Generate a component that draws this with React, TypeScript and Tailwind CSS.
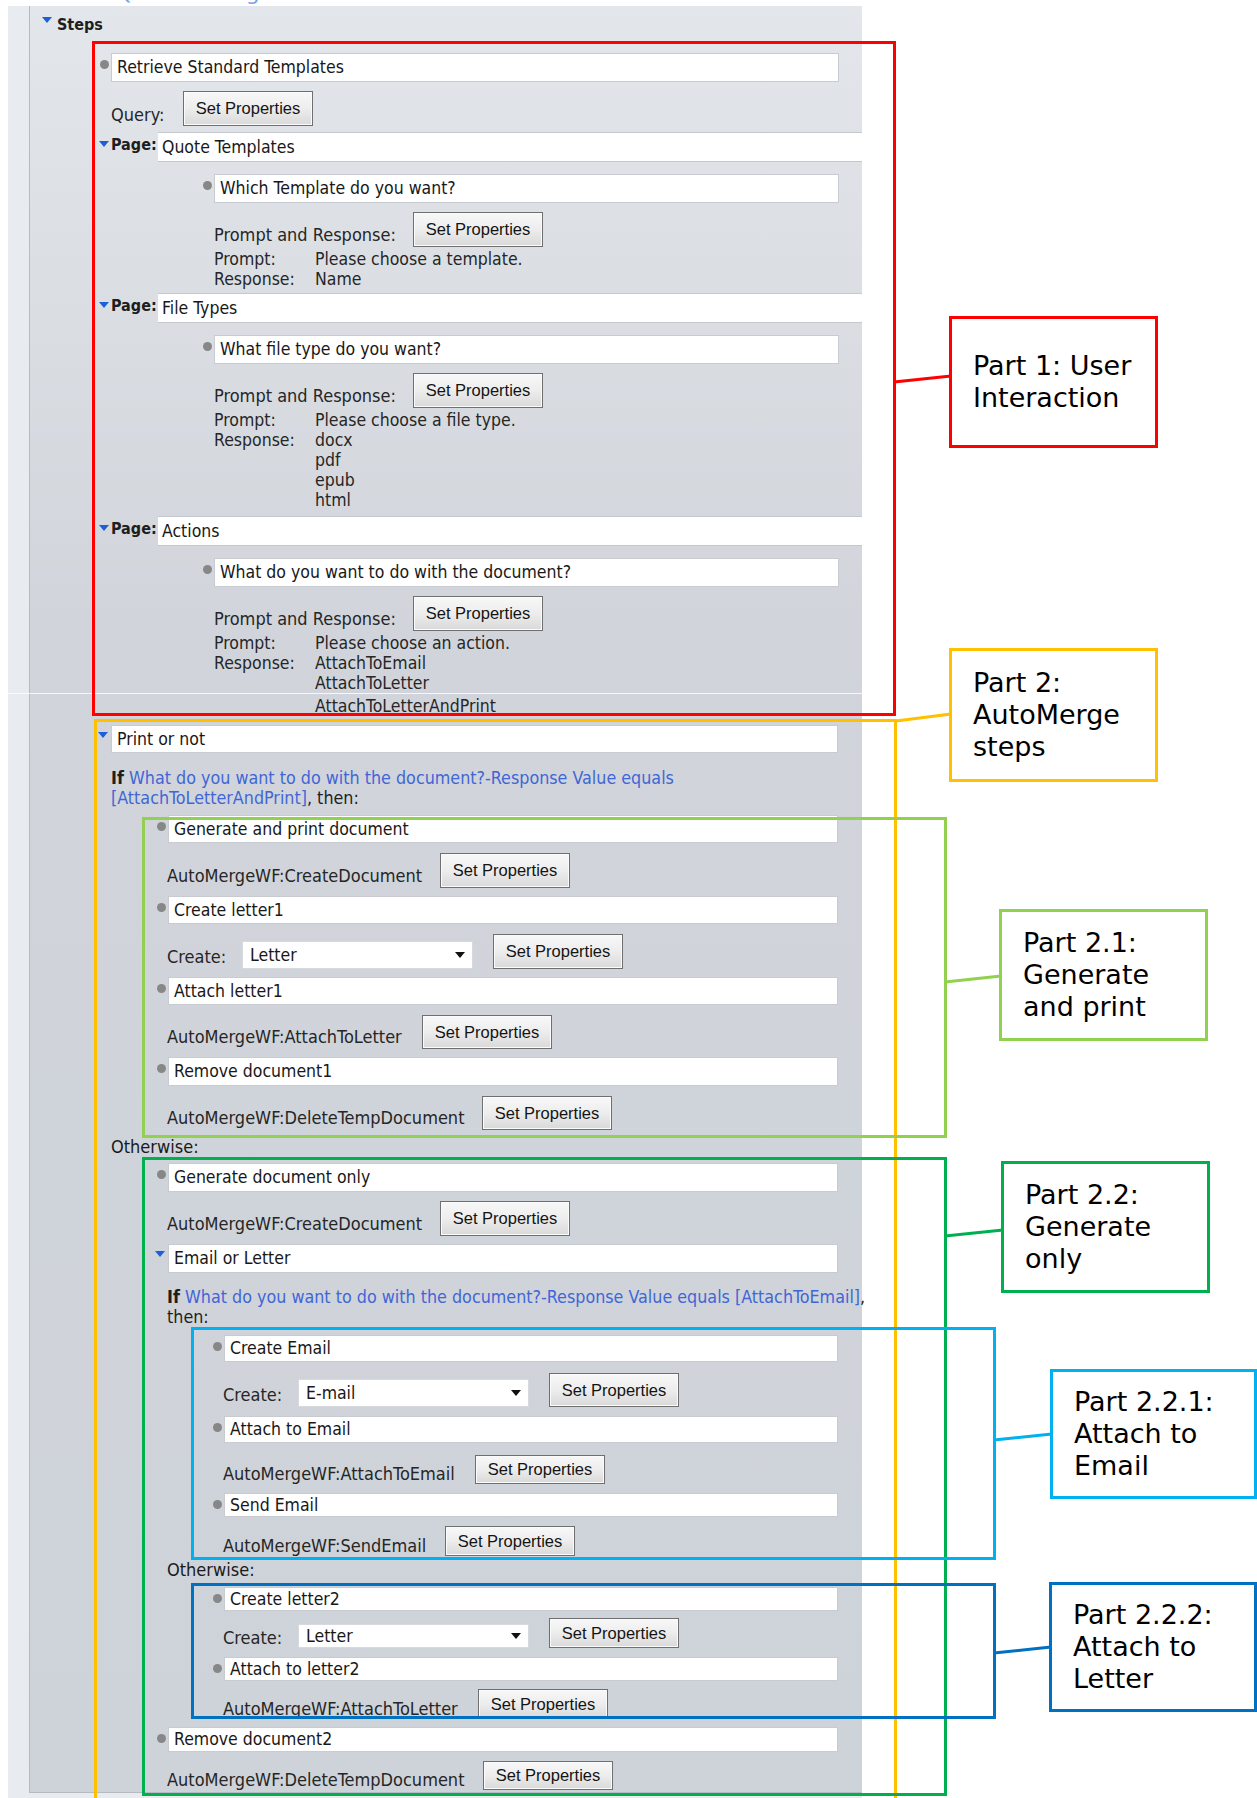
import React from "react";

const UI = "font-['DejaVu_Sans_Condensed','DejaVu_Sans',sans-serif]";
const BTN = "font-['Liberation_Sans',Arial,sans-serif]";
const NOTE = "font-['DejaVu_Sans','Verdana',sans-serif]";

type BoxProps = { text: string; className: string; mark?: "dot" | "caret" };

const Caret = ({ className }: { className: string }) => (
  <span className={`absolute w-0 h-0 border-x-[5px] border-x-transparent border-t-[6px] border-t-[#1d5fd6] ${className}`} />
);

const Box = ({ text, className, mark }: BoxProps) => (
  <div className={`relative flex items-center shrink-0 bg-white border border-[#c8ccd1] pl-[5px] text-[#181818] ${className}`}>
    {mark === "dot" && <span className="absolute left-[-12px] top-[6px] w-[9px] h-[9px] rounded-full bg-[#878787]" />}
    {mark === "caret" && <Caret className="left-[-14px] top-[6px]" />}
    {text}
  </div>
);

const SetProps = ({ className }: { className: string }) => (
  <div
    className={`flex items-center justify-center w-[130px] shrink-0 border border-[#6f6f6f] bg-linear-to-b from-[#f8f8f8] via-[#ededed] to-[#d9d9d9] shadow-[inset_0_0_0_1px_#fbfbfb] text-[16.5px] text-[#141414] ${BTN} ${className}`}
  >
    Set Properties
  </div>
);

interface ActionRowProps {
  label: string;
  labelClass: string;
  className: string;
  btnClass: string;
}

const ActionRow = ({ label, labelClass, className, btnClass }: ActionRowProps) => (
  <div className={`flex items-end shrink-0 ${className}`}>
    <span className={`shrink-0 leading-[20px] text-[18px] text-[#262626] whitespace-nowrap ${labelClass}`}>{label}</span>
    <SetProps className={btnClass} />
  </div>
);

interface CreateRowProps {
  value: string;
  className: string;
  selClass: string;
  btnClass: string;
  labelClass: string;
}

const CreateRow = ({ value, className, selClass, btnClass, labelClass }: CreateRowProps) => (
  <div className={`flex items-end shrink-0 ${className}`}>
    <span className={`w-[75px] shrink-0 leading-[20px] text-[18px] text-[#262626] ${labelClass}`}>Create:</span>
    <div className={`relative flex items-center w-[231px] shrink-0 bg-white border border-[#d6d9dd] pl-[7px] text-[#181818] ${selClass}`}>
      {value}
      <span className="absolute right-[7px] top-1/2 -translate-y-1/2 w-0 h-0 border-x-[5px] border-x-transparent border-t-[6px] border-t-[#111]" />
    </div>
    <SetProps className={`ml-[20px] ${btnClass}`} />
  </div>
);

const PageRow = ({ title, className }: { title: string; className: string }) => (
  <div className={`flex h-[30px] shrink-0 ${className}`}>
    <div className="relative w-[128px] shrink-0 pl-[81px] pt-[3px] leading-[20px] font-bold text-[16px] text-[#1e1e1e]">
      <Caret className="left-[69px] top-[9px]" />
      Page:
    </div>
    <div className="flex-1 flex items-center bg-white border-y border-[#c4c8ce] pl-[4px] text-[#181818]">{title}</div>
  </div>
);

const PromptLines = ({ className, prompt, responses }: { className: string; prompt: string; responses: string[] }) => (
  <div className={`ml-[184px] grid grid-cols-[101px_1fr] leading-[20px] text-[#262626] shrink-0 ${className}`}>
    <span>Prompt:</span>
    <span>{prompt}</span>
    <span>Response:</span>
    <div className="flex flex-col">
      {responses.map((r) => (
        <span key={r}>{r}</span>
      ))}
    </div>
  </div>
);

const Callout = ({ className, lines }: { className: string; lines: string[] }) => (
  <div className={`absolute flex flex-col justify-center bg-white border-[3px] pl-[21px] text-[27px] leading-[32px] text-black whitespace-pre ${NOTE} ${className}`}>
    {lines.map((l) => (
      <span key={l}>{l}</span>
    ))}
  </div>
);

const LINK = "text-[#3f66d6]";

export default function App() {
  return (
    <div className={`relative w-[1257px] h-[1798px] overflow-hidden bg-white text-[17.5px] ${UI}`}>
      {/* clipped heading from the page above */}
      <div className="h-[6px] overflow-hidden">
        <div className={`-mt-[19px] ml-[6px] text-[22px] leading-[24px] text-[#7aa3e0] ${NOTE}`}>Generate Quote Dialog</div>
      </div>

      {/* Steps panel */}
      <div className="ml-[8px] w-[854px] h-[1792px] flex bg-[#e8ebef]">
        <div className="w-[21px] shrink-0" />
        <div className="w-[833px] h-[1787px] flex flex-col border-l border-b border-[#b6bbc3] bg-linear-to-b from-[#e3e7eb] via-[#d1d5db] via-35% to-[#ced3d9]">
          <div className="relative flex items-center h-[36px] shrink-0 pl-[27px] pt-[2px]">
            <Caret className="left-[12px] top-[11px]" />
            <span className="font-bold text-[16px] text-[#1e1e1e]">Steps</span>
          </div>

          <Box text="Retrieve Standard Templates" mark="dot" className="mt-[11px] ml-[81px] w-[728px] h-[29px]" />
          <ActionRow label="Query:" labelClass="w-[72px] pb-[1px]" className="mt-[9px] ml-[81px]" btnClass="h-[35px]" />

          <PageRow title="Quote Templates" className="mt-[6px]" />
          <Box text="Which Template do you want?" mark="dot" className="mt-[12px] ml-[184px] w-[625px] h-[29px]" />
          <ActionRow label="Prompt and Response:" labelClass="w-[199px] pb-[2px]" className="mt-[9px] ml-[184px]" btnClass="h-[35px]" />
          <PromptLines className="mt-[2px]" prompt="Please choose a template." responses={["Name"]} />

          <PageRow title="File Types" className="mt-[4px]" />
          <Box text="What file type do you want?" mark="dot" className="mt-[12px] ml-[184px] w-[625px] h-[29px]" />
          <ActionRow label="Prompt and Response:" labelClass="w-[199px] pb-[2px]" className="mt-[9px] ml-[184px]" btnClass="h-[35px]" />
          <PromptLines className="mt-[2px]" prompt="Please choose a file type." responses={["docx", "pdf", "epub", "html"]} />

          <PageRow title="Actions" className="mt-[6px]" />
          <Box text="What do you want to do with the document?" mark="dot" className="mt-[12px] ml-[184px] w-[625px] h-[29px]" />
          <ActionRow label="Prompt and Response:" labelClass="w-[199px] pb-[2px]" className="mt-[9px] ml-[184px]" btnClass="h-[35px]" />
          <PromptLines className="mt-[2px]" prompt="Please choose an action." responses={["AttachToEmail", "AttachToLetter"]} />
          <div className="mt-[3px] ml-[285px] leading-[20px] text-[#262626] shrink-0">AttachToLetterAndPrint</div>

          {/* AutoMerge steps */}
          <Box text="Print or not" mark="caret" className="mt-[9px] ml-[81px] w-[727px] h-[28px]" />
          <div className="mt-[15px] ml-[81px] leading-[20px] text-[17.75px] text-[#1e1e1e] whitespace-nowrap shrink-0">
            <span className="font-bold">If</span> <span className={LINK}>What do you want to do with the document?-Response Value equals</span>
            <br />
            <span className={LINK}>[AttachToLetterAndPrint]</span>, then:
          </div>

          <Box text="Generate and print document" mark="dot" className="mt-[7px] ml-[138px] w-[670px] h-[28px]" />
          <ActionRow label="AutoMergeWF:CreateDocument" labelClass="w-[273px] pb-[2px]" className="mt-[10px] ml-[137px]" btnClass="h-[35px]" />
          <Box text="Create letter1" mark="dot" className="mt-[8px] ml-[138px] w-[670px] h-[28px]" />
          <CreateRow value="Letter" className="mt-[10px] ml-[137px]" labelClass="pb-[2px]" selClass="h-[28px]" btnClass="h-[35px]" />
          <Box text="Attach letter1" mark="dot" className="mt-[8px] ml-[138px] w-[670px] h-[28px]" />
          <ActionRow label="AutoMergeWF:AttachToLetter" labelClass="w-[255px] pb-[2px]" className="mt-[10px] ml-[137px]" btnClass="h-[34px]" />
          <Box text="Remove document1" mark="dot" className="mt-[8px] ml-[138px] w-[670px] h-[29px]" />
          <ActionRow label="AutoMergeWF:DeleteTempDocument" labelClass="w-[315px] pb-[2px]" className="mt-[10px] ml-[137px]" btnClass="h-[34px]" />

          <div className="mt-[7px] ml-[81px] leading-[20px] text-[18px] text-[#1a1a1a] shrink-0">Otherwise:</div>

          <Box text="Generate document only" mark="dot" className="mt-[6px] ml-[138px] w-[670px] h-[29px]" />
          <ActionRow label="AutoMergeWF:CreateDocument" labelClass="w-[273px] pb-[2px]" className="mt-[9px] ml-[137px]" btnClass="h-[35px]" />
          <Box text="Email or Letter" mark="caret" className="mt-[8px] ml-[138px] w-[670px] h-[29px]" />
          <div className="mt-[14px] ml-[137px] leading-[20px] text-[17.75px] text-[#1e1e1e] whitespace-nowrap shrink-0">
            <span className="font-bold">If</span> <span className={LINK}>What do you want to do with the document?-Response Value equals [AttachToEmail]</span>,
            <br />
            then:
          </div>

          <Box text="Create Email" mark="dot" className="mt-[8px] ml-[194px] w-[614px] h-[27px]" />
          <CreateRow value="E-mail" className="mt-[11px] ml-[193px]" labelClass="pb-[2px]" selClass="h-[28px]" btnClass="h-[34px]" />
          <Box text="Attach to Email" mark="dot" className="mt-[9px] ml-[194px] w-[614px] h-[27px]" />
          <ActionRow label="AutoMergeWF:AttachToEmail" labelClass="w-[252px]" className="mt-[12px] ml-[193px]" btnClass="h-[29px]" />
          <Box text="Send Email" mark="dot" className="mt-[9px] ml-[194px] w-[614px] h-[24px]" />
          <ActionRow label="AutoMergeWF:SendEmail" labelClass="w-[222px]" className="mt-[9px] ml-[193px]" btnClass="h-[30px]" />

          <div className="mt-[4px] ml-[137px] leading-[20px] text-[18px] text-[#1a1a1a] shrink-0">Otherwise:</div>

          <Box text="Create letter2" mark="dot" className="mt-[7px] ml-[194px] w-[614px] h-[24px]" />
          <CreateRow value="Letter" className="mt-[7px] ml-[193px]" labelClass="" selClass="h-[24px]" btnClass="h-[30px]" />
          <Box text="Attach to letter2" mark="dot" className="mt-[9px] ml-[194px] w-[614px] h-[24px]" />
          <ActionRow label="AutoMergeWF:AttachToLetter" labelClass="w-[255px]" className="mt-[8px] ml-[193px]" btnClass="h-[30px]" />

          <Box text="Remove document2" mark="dot" className="mt-[8px] ml-[138px] w-[670px] h-[25px]" />
          <ActionRow label="AutoMergeWF:DeleteTempDocument" labelClass="w-[316px]" className="mt-[9px] ml-[137px]" btnClass="h-[29px]" />
        </div>
      </div>

      {/* stitch seam in the screenshot */}
      <div className="absolute left-[8px] top-[693px] w-[856px] h-px bg-white/80" />

      {/* annotation frames */}
      <div className="absolute left-[92px] top-[41px] w-[804px] h-[675px] border-[3px] border-[#ff0000]" />
      <div className="absolute left-[94px] top-[719px] w-[803px] h-[1090px] border-[3px] border-[#ffc000]" />
      <div className="absolute left-[142px] top-[817px] w-[805px] h-[321px] border-[3px] border-[#92d050]" />
      <div className="absolute left-[142px] top-[1157px] w-[805px] h-[639px] border-[3px] border-[#00b050]" />
      <div className="absolute left-[191px] top-[1327px] w-[805px] h-[233px] border-[3px] border-[#00b0f0]" />
      <div className="absolute left-[191px] top-[1583px] w-[805px] h-[136px] border-[3px] border-[#0070c0]" />

      <svg className="absolute inset-0 w-[1257px] h-[1798px] pointer-events-none" viewBox="0 0 1257 1798">
        <line x1="894" y1="382" x2="951" y2="376" stroke="#ff0000" strokeWidth="3" />
        <line x1="896" y1="721" x2="951" y2="714" stroke="#ffc000" strokeWidth="3" />
        <line x1="945" y1="982" x2="1001" y2="976" stroke="#92d050" strokeWidth="3" />
        <line x1="945" y1="1236" x2="1003" y2="1230" stroke="#00b050" strokeWidth="3" />
        <line x1="994" y1="1440" x2="1052" y2="1434" stroke="#00b0f0" strokeWidth="3" />
        <line x1="994" y1="1653" x2="1051" y2="1647" stroke="#0070c0" strokeWidth="3" />
      </svg>

      <Callout className="left-[949px] top-[316px] w-[209px] h-[132px] border-[#ff0000]" lines={["Part 1: User", "Interaction"]} />
      <Callout className="left-[949px] top-[648px] w-[209px] h-[134px] border-[#ffc000]" lines={["Part 2:", "AutoMerge", "steps"]} />
      <Callout className="left-[999px] top-[909px] w-[209px] h-[132px] border-[#92d050]" lines={["Part 2.1:", "Generate", "and print"]} />
      <Callout className="left-[1001px] top-[1161px] w-[209px] h-[132px] border-[#00b050]" lines={["Part 2.2:", "Generate", "only"]} />
      <Callout className="left-[1050px] top-[1369px] w-[207px] h-[130px] border-[#00b0f0]" lines={["Part 2.2.1:", "Attach to", "Email"]} />
      <Callout className="left-[1049px] top-[1582px] w-[208px] h-[130px] border-[#0070c0]" lines={["Part 2.2.2:", "Attach to", "Letter"]} />
    </div>
  );
}
